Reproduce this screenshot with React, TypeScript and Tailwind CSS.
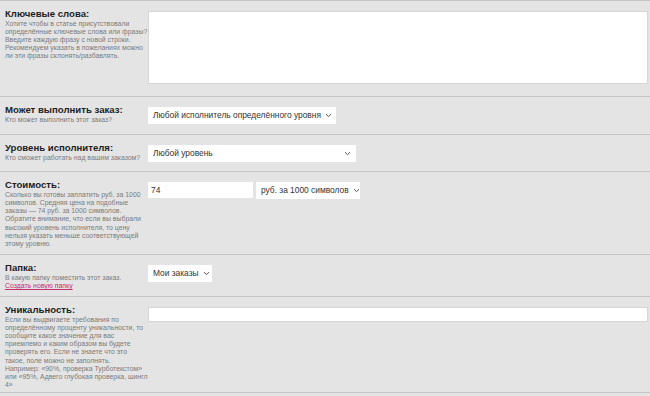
import { ReactNode } from "react";

const Chevron = () => (
  <svg width="7" height="5" viewBox="0 0 7 5" className="shrink-0">
    <path d="M1 1.2 L3.5 3.6 L6 1.2" fill="none" stroke="#555" strokeWidth="1" />
  </svg>
);

const Select = ({ text, width }: { text: string; width: string }) => (
  <div
    className={`${width} h-[17px] bg-white flex items-center justify-between gap-[4px] pl-[5px] pr-[5px] text-[8.4px] text-[#333] whitespace-nowrap`}
  >
    <span>{text}</span>
    <Chevron />
  </div>
);

const Row = ({
  title,
  lines,
  field,
  pb,
  extra,
}: {
  title: string;
  lines: string[];
  field: ReactNode;
  pb: string;
  extra?: ReactNode;
}) => (
  <div className={`flex border-t border-[#c6c6c6] pt-[7px] ${pb}`}>
    <div className="w-[148px] shrink-0 pl-[5px]">
      <div className="text-[9.6px] leading-[12px] font-bold text-[#1e1e1e]">{title}</div>
      <div className="text-[6.9px] leading-[8.1px] text-[#7b7b7b] whitespace-nowrap">
        {lines.map((l) => (
          <div key={l}>{l}</div>
        ))}
        {extra}
      </div>
    </div>
    <div className="flex-1 pt-[3px] pr-[2px]">{field}</div>
  </div>
);

export default function App() {
  return (
    <div
      className="w-[650px] h-[396px] overflow-hidden bg-[#e4e4e4]"
      style={{ fontFamily: '"Liberation Sans", Arial, sans-serif' }}
    >
      <Row
        title="Ключевые слова:"
        pb="pb-[12px]"
        lines={[
          "Хотите чтобы в статье присутствовали",
          "определённые ключевые слова или фразы?",
          "Введите каждую фразу с новой строки.",
          "Рекомендуем указать в пожеланиях можно",
          "ли эти фразы склонять/разбавлять.",
        ]}
        field={<div className="h-[73px] bg-white border border-[#d6d6d6]" />}
      />

      <Row
        title="Может выполнить заказ:"
        pb="pb-[10px]"
        lines={["Кто может выполнить этот заказ?"]}
        field={<Select text="Любой исполнитель определённого уровня" width="w-[188px]" />}
      />

      <Row
        title="Уровень исполнителя:"
        pb="pb-[9px]"
        lines={["Кто сможет работать над вашим заказом?"]}
        field={<Select text="Любой уровень" width="w-[208px]" />}
      />

      <Row
        title="Стоимость:"
        pb="pb-[6px]"
        lines={[
          "Сколько вы готовы заплатить руб. за 1000",
          "символов. Средняя цена на подобные",
          "заказы — 74 руб. за 1000 символов.",
          "Обратите внимание, что если вы выбрали",
          "высокий уровень исполнителя, то цену",
          "нельзя указать меньше соответствующей",
          "этому уровню.",
        ]}
        field={
          <div className="flex gap-[3px]">
            <div className="w-[105px] h-[16px] bg-white flex items-center pl-[3px] text-[8.4px] text-[#333]">
              74
            </div>
            <Select text="руб. за 1000 символов" width="w-[104px]" />
          </div>
        }
      />

      <Row
        title="Папка:"
        pb="pb-[6px]"
        lines={["В какую папку поместить этот заказ."]}
        extra={
          <a href="#" className="text-[#c2306e] underline">
            Создать новую папку
          </a>
        }
        field={<Select text="Мои заказы" width="w-[64px]" />}
      />

      <Row
        title="Уникальность:"
        pb="pb-[3px]"
        lines={[
          "Если вы выдвигаете требования по",
          "определённому проценту уникальности, то",
          "сообщите какое значение для вас",
          "приемлемо и каким образом вы будете",
          "проверять его. Если не знаете что это",
          "такое, поле можно не заполнять.",
          "Например: «90%, проверка Турботекстом»",
          "или «95%, Адвего глубокая проверка, шингл",
          "4»",
        ]}
        field={<div className="h-[15px] bg-white border border-[#d6d6d6]" />}
      />
      <div className="border-t border-[#c6c6c6]" />
    </div>
  );
}
